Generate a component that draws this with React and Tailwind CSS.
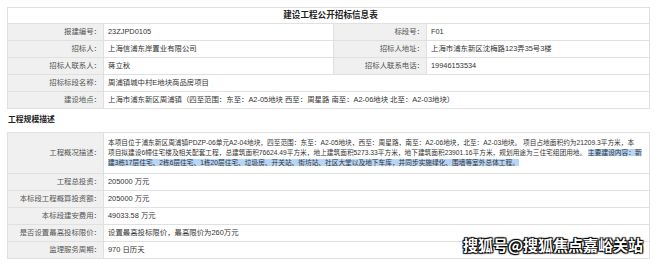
import React from "react";

const font = { fontFamily: '"Liberation Sans", "Noto Sans CJK SC", sans-serif' };

const topRows = [
  ["报建编号：", "23ZJPD0105", "标段号：", "F01"],
  ["招标人：", "上海信浦东岸置业有限公司", "招标人地址：", "上海市浦东新区沈梅路123弄35号3楼"],
  ["招标人联系人：", "蒋立秋", "招标人联系电话：", "19946153534"],
];

const bottomRows = [
  ["工程总投资：", "205000 万元"],
  ["本标段工程概算投资额：", "205000 万元"],
  ["本标段建安费用：", "49033.58 万元"],
  ["是否设置最高投标限价：", "设置最高投标限价，最高限价为260万元"],
  ["监理服务周期：", "970 日历天"],
];

const Label = ({ children, className = "" }) => (
  <div className={`flex items-center justify-end border-b border-r border-[#e0e0e0] bg-[#f0f0f0] pr-[2px] text-[#555] ${className}`}>
    {children}
  </div>
);

const Value = ({ children, className = "" }) => (
  <div className={`flex items-center overflow-hidden border-b border-r border-[#e0e0e0] bg-white pl-[4px] text-[#333] ${className}`}>
    {children}
  </div>
);

export default function App() {
  return (
    <div className="relative h-[264px] w-[660px] overflow-hidden bg-white text-[7.4px] leading-none" style={font}>
      <div className="ml-[7px] mt-[7px] w-[643px] border-l border-t border-[#e0e0e0]">
        <div className="flex h-[16px] items-center justify-center border-b border-r border-[#e0e0e0] pl-[4px] text-[8.6px] font-bold text-[#222]">
          建设工程公开招标信息表
        </div>
        <div className="grid grid-cols-[96px_230px_93px_1fr] auto-rows-[17px]">
          {topRows.map((row) => (
            <React.Fragment key={row[0]}>
              <Label>{row[0]}</Label>
              <Value>{row[1]}</Value>
              <Label>{row[2]}</Label>
              <Value>{row[3]}</Value>
            </React.Fragment>
          ))}
          <Label>招标标段名称：</Label>
          <Value className="col-span-3">周浦镇城中村E地块商品房项目</Value>
          <Label>建设地点：</Label>
          <Value className="col-span-3">
            上海市浦东新区周浦镇（四至范围：东至：A2-05地块 西至：周星路 南至：A2-06地块 北至：A2-03地块）
          </Value>
        </div>
      </div>

      <div className="ml-[8px] mt-[4px] h-[14px] text-[7.8px] font-bold leading-[14px] text-[#222]">工程规模描述</div>

      <div className="ml-[7px] mt-[5px] w-[643px] border-l border-t border-[#e0e0e0]">
        <div className="grid grid-cols-[96px_1fr]">
          <Label className="h-[41px]">工程概况描述：</Label>
          <Value className="h-[41px]">
            <div className="whitespace-nowrap text-[6.7px] leading-[10px]">
              <div>
                本项目位于浦东新区周浦镇PDZP-06单元A2-04地块，四至范围：东至：A2-05地块，西至：周星路，南至：A2-06地块，北至：A2-03地块。 项目占地面积约为21209.3平方米，本
              </div>
              <div>
                项目拟建设6幢住宅楼及相关配套工程，总建筑面积76624.49平方米，地上建筑面积5273.33平方米，地下建筑面积23901.16平方米，规划用途为三住宅组团用地。{" "}
                <span className="bg-[#b7d5f7]">主要建设内容：新</span>
              </div>
              <div>
                <span className="bg-[#b7d5f7]">
                  建3栋17层住宅、2栋6层住宅、1栋20层住宅、垃圾房、开关站、街坊站、社区大堂以及地下车库，并同步实施绿化、围墙等室外总体工程。
                </span>
              </div>
            </div>
          </Value>
          {bottomRows.map((row) => (
            <React.Fragment key={row[0]}>
              <Label className="h-[17px]">{row[0]}</Label>
              <Value className="h-[17px]">{row[1]}</Value>
            </React.Fragment>
          ))}
        </div>
      </div>

      <div
        className="absolute left-[463px] top-[237px] whitespace-nowrap text-[15px] font-bold leading-none text-white"
        style={{ fontFamily: '"Noto Sans CJK SC", sans-serif', textShadow: "0 0 1px #000, 1px 1px 1px #000, -1px -1px 1px #000, 1px -1px 1px #000, -1px 1px 1px #000" }}
      >
        搜狐号@搜狐焦点嘉峪关站
      </div>
    </div>
  );
}
